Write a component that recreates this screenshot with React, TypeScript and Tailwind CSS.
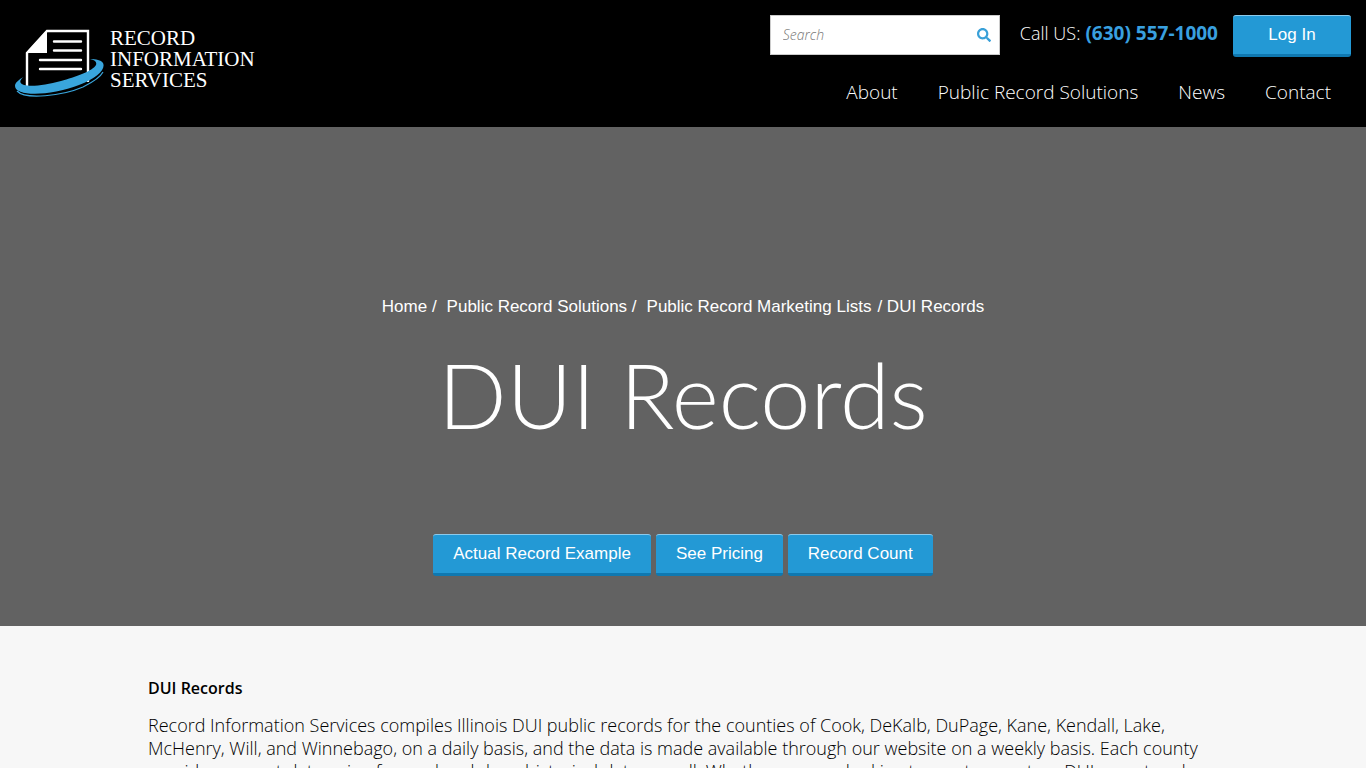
import { FaSearch } from "react-icons/fa";

const navItems = ["About", "Public Record Solutions", "News", "Contact"];
const actions = ["Actual Record Example", "See Pricing", "Record Count"];

const button =
  "rounded-[3px] border-t border-t-[#8ccaeb] border-b-3 border-b-[#0f78b0] bg-[#2399d5] text-center text-[17px] text-white font-['Liberation_Sans',Arial,sans-serif]";

function Logo() {
  return (
    <a href="#" className="flex items-start gap-[5px] text-white">
      <svg viewBox="0 0 90 70" className="h-[70px] w-[90px] shrink-0" aria-hidden="true">
        <path d="M12 60V26L32 4H73V55" fill="none" stroke="#fff" strokeWidth="2.400" />
        <path d="M11 26L32 3V26Z" fill="#fff" />
        <path d="M39 14.500H66M39 23.500H66M25 33H66M25 42H66" stroke="#fff" strokeWidth="2.400" strokeLinecap="round" />
        <path d="M10 49C3 53 0 56 0 59C0 70 36 69 64 58C82 51 91 42 88 36C86 33 81 32 75 32C80 33 82 35 81 38C78 44 60 50 46 54C31 58 17 60 9 58C3 56 5 52 10 49Z" fill="#39a5dc" />
        <path d="M1 63C10 71 40 70 66 59C78 54 86 48 89 42" fill="none" stroke="#000" strokeWidth="1" />
        <path d="M2 64C10 73 47 69 68 60C78 55 85 51 88 45" fill="none" stroke="#39a5dc" strokeWidth="1.200" />
      </svg>
      <span className="pt-px font-['Liberation_Serif',serif] text-[21px] leading-[21px]">
        RECORD
        <br />
        INFORMATION
        <br />
        SERVICES
      </span>
    </a>
  );
}

export default function App() {
  return (
    <div className="h-screen overflow-hidden bg-[#f7f7f7] font-['Open_Sans',sans-serif] text-black">
      <header className="flex items-start justify-between bg-black px-[15px] pt-[15px] pb-[21px] text-white">
        <div className="pt-3">
          <Logo />
        </div>
        <div className="flex flex-col items-end gap-[21px]">
          <div className="flex items-start">
            <form className="mr-5 flex h-10 w-[230px] items-center border border-[#ccc] bg-white px-2">
              <input
                type="search"
                aria-label="Search"
                placeholder="Search"
                className="min-w-0 flex-1 bg-transparent px-1 text-sm text-black italic outline-none placeholder:font-light placeholder:text-[#777]"
              />
              <button type="submit" aria-label="Submit search" className="text-[#39a0d8]">
                <FaSearch className="size-3.5" />
              </button>
            </form>
            <p className="mr-[15px] flex gap-[5px] pt-1.5 leading-6">
              <span className="text-lg leading-6 font-light">Call US:</span>
              <a href="tel:6305571000" className="text-[19px] leading-6 font-bold text-[#39a0e0]">
                (630) 557-1000
              </a>
            </p>
            <button type="button" className={`${button} h-[42px] w-[118px]`}>
              Log In
            </button>
          </div>
          <nav className="flex gap-10 pr-5 text-[19px] leading-7 font-light">
            {navItems.map((item) => (
              <a key={item} href="#">
                {item}
              </a>
            ))}
          </nav>
        </div>
      </header>

      <section className="flex flex-col items-center bg-[#626262] pt-[168px] pb-[50px] text-white">
        <nav aria-label="Breadcrumb" className="flex font-['Liberation_Sans',Arial,sans-serif] text-[17px] leading-6">
          <a href="#">Home /</a>
          <a href="#" className="ml-2.5">Public Record Solutions /</a>
          <a href="#" className="ml-2.5">Public Record Marketing Lists</a>
          <span className="ml-1.5">/ DUI Records</span>
        </nav>
        <h1 className="mt-5 font-['Lato',sans-serif] text-[90px] leading-[110px] font-light">DUI Records</h1>
        <div className="mt-[85px] flex gap-[5px]">
          {actions.map((action) => (
            <button key={action} type="button" className={`${button} h-[42px] px-5`}>
              {action}
            </button>
          ))}
        </div>
      </section>

      <main className="mx-auto max-w-[1100px] px-[15px] pt-[50px]">
        <h2 className="text-base leading-6 font-semibold">DUI Records</h2>
        <p className="mt-3.5 text-lg leading-[23px] font-light">
          Record Information Services compiles Illinois DUI public records for the counties of Cook, DeKalb, DuPage,
          Kane, Kendall, Lake, McHenry, Will, and Winnebago, on a daily basis, and the data is made available through
          our website on a weekly basis. Each county provides current data going forward and deep historical data as
          well. Whether you are looking to create a custom DUI report and
        </p>
      </main>
    </div>
  );
}
